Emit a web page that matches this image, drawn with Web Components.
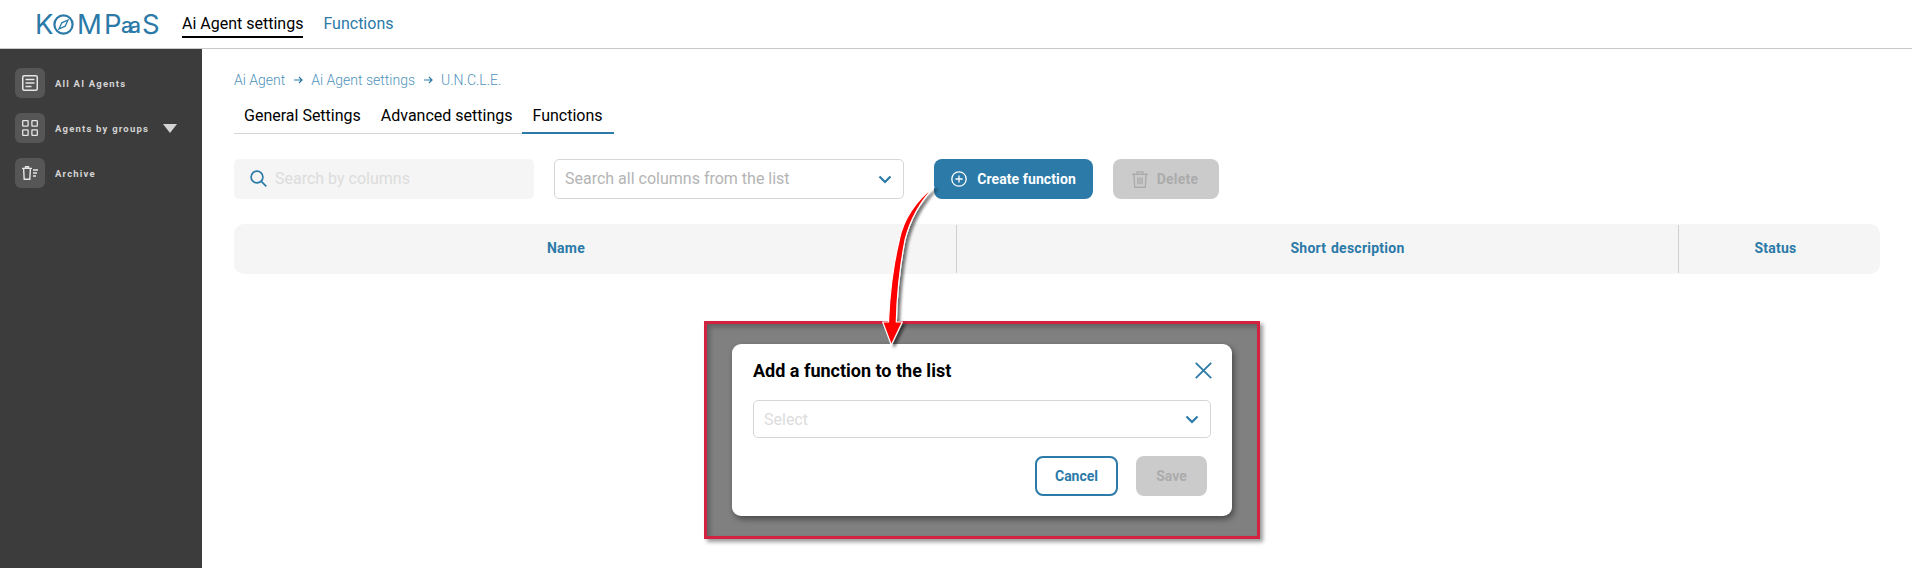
<!DOCTYPE html>
<html><head><meta charset="utf-8"><title>Kompas</title>
<style>
html,body{margin:0;padding:0;height:568px;overflow:hidden;background:#fff;font-family:Roboto,"Liberation Sans",sans-serif;}
</style></head><body>
<app-shell></app-shell>
<script>
const BLUE='#2b7aa8';
function def(name,html,setup){
  customElements.define(name,class extends HTMLElement{
    constructor(){super();const r=this.attachShadow({mode:'open'});r.innerHTML=html;}
    connectedCallback(){if(setup)setup(this);}
  });
}
const chevron=`<svg width="14" height="9" viewBox="0 0 14 9" fill="none" stroke="${BLUE}" stroke-width="2.2"><path d="M1.5 1.5 7 7l5.5-5.5"/></svg>`;

def('k-logo',`<style>
:host{display:flex;align-items:center;color:${BLUE};font:400 27.500px/28px Inter,sans-serif;height:28px}
span{display:block;text-align:center;flex:none}
svg{display:block;flex:none}
.aa{font:500 21px/28px Inter,sans-serif;letter-spacing:-4px;width:17px;margin:3px 4px 0 1px;text-align:left}
</style><span style="width:18px;text-align:left">K</span><svg width="21" height="21" viewBox="0 0 21 21" fill="none"><circle cx="10.500" cy="10.500" r="9.100" stroke="${BLUE}" stroke-width="2.200"/><path d="M15 6l-2.800 6.200L6 15l2.800-6.200z" stroke="${BLUE}" stroke-width="1.300"/></svg><span style="width:24px;margin-left:3px">M</span><span style="width:16px;margin-left:3px;">P</span><span class="aa">aa</span><span style="width:16px">S</span>`);

def('top-nav',`<style>
:host{display:flex;height:49px;box-sizing:border-box;align-items:flex-start;background:#fff;border-bottom:1px solid #c9c9c9;padding-left:35px;flex:none}
k-logo{margin-top:10px;width:147px;flex:none}
a{font-size:16px;line-height:19px;color:${BLUE};padding:14px 0 3px;display:block;height:20px;box-sizing:content-box}
a.on{color:#000;border-bottom:2px solid #000;margin-right:20px;height:19px}
</style><k-logo></k-logo><a class="on">Ai Agent settings</a><a>Functions</a>`);

def('side-item',`<style>
:host{display:flex;align-items:center;height:30px;color:#d4d4d4;font:700 9.500px/30px Roboto,sans-serif;letter-spacing:1.2px}
.ic{width:30px;height:30px;border-radius:6px;background:#565656;display:flex;align-items:center;justify-content:center;margin-right:10px;flex:none}
.tx{display:flex;align-items:center;padding-top:2px}
</style><div class="ic"><slot name="icon"></slot></div><div class="tx"><slot></slot></div>`);

def('side-bar',`<style>
:host{display:flex;flex-direction:column;gap:15px;width:202px;background:#3c3c3c;box-sizing:border-box;padding:19px 0 0 15px;flex:none}
.tri{width:0;height:0;border:7px solid transparent;border-top:9px solid #d4d4d4;border-bottom:0;margin-left:14px;margin-top:-2px}
svg{display:block}
</style>
<side-item><svg slot="icon" width="16" height="16" viewBox="0 0 16 16" fill="none" stroke="#e6e6e6"><rect x=".75" y=".75" width="14.500" height="14.500" rx="1.500" stroke-width="1.500"/><path d="M3.500 4.500h9M3.500 8h9M3.500 11.500h6" stroke-width="1.400"/></svg>All AI Agents</side-item>
<side-item><svg slot="icon" width="16" height="16" viewBox="0 0 16 16" fill="none" stroke="#e6e6e6" stroke-width="1.300"><rect x=".7" y=".7" width="5.400" height="5.400" rx=".6"/><rect x="9.900" y=".7" width="5.400" height="5.400" rx=".6"/><rect x=".7" y="9.900" width="5.400" height="5.400" rx=".6"/><rect x="9.900" y="9.900" width="5.400" height="5.400" rx=".6"/></svg>Agents by groups<span class="tri"></span></side-item>
<side-item><svg slot="icon" width="16" height="14" viewBox="0 0 16 14" fill="none" stroke="#e6e6e6" stroke-width="1.400"><path d="M0 2.400h10M3.500 2.200V.7h3v1.500M1.600 2.400l.6 10.900h5.600l.6-10.900M11 4h5M11 7h4M11 10h3"/></svg>Archive</side-item>`);

def('bread-crumbs',`<style>
:host{display:flex;align-items:center;color:#4f93bb;font-size:14px;font-weight:300;line-height:16px;height:16px}
svg{margin:0 8px 0 9px;display:block}
</style><span>Ai Agent</span><svg width="9" height="8" viewBox="0 0 9 8" fill="none" stroke="${BLUE}" stroke-width="1.200"><path d="M0 4h8M5 1l3 3-3 3"/></svg><span>Ai Agent settings</span><svg width="9" height="8" viewBox="0 0 9 8" fill="none" stroke="${BLUE}" stroke-width="1.200"><path d="M0 4h8M5 1l3 3-3 3"/></svg><span>U.N.C.L.E.</span>`);

def('tab-bar',`<style>
:host{display:flex;height:37px;box-sizing:border-box;border-bottom:1px solid #d6d6d6;width:380px;font-size:16px;line-height:19px;color:#000}
a{display:block;padding:9px 10px 0;height:37px;box-sizing:border-box;white-space:nowrap;flex:none}
a.on{border-bottom:2px solid ${BLUE};padding:9px 11px 0 10px}
</style><a>General Settings</a><a>Advanced settings</a><a class="on">Functions</a>`);

def('search-box',`<style>
:host{display:flex;align-items:center;width:300px;height:40px;background:#f5f5f5;border-radius:5px;box-sizing:border-box;padding-left:16px;padding-bottom:1px;font-size:16px;color:#dcdcdc;flex:none}
svg{margin-right:8px;display:block}
</style><svg width="17" height="17" viewBox="0 0 17 17" fill="none" stroke="${BLUE}" stroke-width="1.700"><circle cx="7" cy="7" r="5.900"/><path d="M11.300 11.300l5 5"/></svg>Search by columns`);

def('select-box',`<style>
:host{display:flex;align-items:center;justify-content:space-between;height:40px;box-sizing:border-box;border:1px solid #d6d6d6;border-radius:5px;padding:0 11px 0 10px;font-size:16px;color:var(--ph,#b4b4b4);background:#fff}
svg{display:block}
span{display:block;margin-bottom:var(--nudge,1px)}
</style><span><slot></slot></span>${chevron}`);

def('action-button',`<style>
:host{display:flex;align-items:center;justify-content:center;height:40px;border-radius:8px;box-sizing:border-box;font-size:14px;font-weight:700;flex:none}
:host([kind=primary]){background:${BLUE};color:#fff}
:host([kind=disabled]){background:#cbcbcb;color:#ababab}
:host([kind=outline]){background:#fff;color:${BLUE};border:2px solid ${BLUE}}
</style><slot></slot>`);

def('table-head',`<style>
:host{display:grid;grid-template-columns:722px 1px 721px 1px 1fr;align-items:center;height:50px;background:#f5f5f5;border-radius:10px;color:${BLUE};font-size:14px;font-weight:700;text-align:center;width:1646px;letter-spacing:.25px;word-spacing:1px}
i{display:block;height:48px;background:#d0d0d0}
div{padding-bottom:2px}
.n{padding-right:58px}.d{padding-left:60px}.st{padding-right:8px}
</style><div class="n">Name</div><i></i><div class="d">Short description</div><i></i><div class="st">Status</div>`);

def('main-view',`<style>
:host{display:flex;flex-direction:column;flex:1;box-sizing:border-box;padding:23px 0 0 32px;min-width:0}
tab-bar{margin-top:9px}
.tools{display:flex;margin-top:25px;gap:20px}
select-box{width:350px;flex:none}
.create{width:159px;margin-left:10px;letter-spacing:.1px}
.del{width:106px;letter-spacing:.2px}
svg{display:block;margin-right:9px}
table-head{margin-top:25px}
</style>
<bread-crumbs></bread-crumbs><tab-bar></tab-bar>
<div class="tools"><search-box></search-box><select-box>Search all columns from the list</select-box>
<action-button class="create" kind="primary"><svg width="16" height="16" viewBox="0 0 16 16" fill="none" stroke="#fff" stroke-width="1.300" style="margin-right:10px"><circle cx="8" cy="8" r="7.200"/><path d="M8 4.400v7.200M4.400 8h7.200"/></svg>Create function</action-button>
<action-button class="del" kind="disabled"><svg style="margin-left:-2px" width="16" height="17" viewBox="0 0 15 16" fill="none" stroke="#ababab" stroke-width="1.300"><path d="M0 3h15M4.800 3V.8h5.400V3M1.800 3l.7 12.300h10L13.200 3M5.500 6v6.500M7.500 6v6.500M9.500 6v6.500"/></svg>Delete</action-button></div>
<table-head></table-head>`);

def('dialog-card',`<style>
:host{display:block;width:500px;height:172px;background:#fff;border-radius:9px;box-sizing:border-box;padding:15px 21px;box-shadow:2px 3px 6px rgba(0,0,0,.45)}
.t{display:flex;justify-content:space-between;align-items:center;height:22px;font-size:18px;font-weight:700;color:#000}
select-box{margin-top:19px;height:38px;--ph:#dcdcdc;--nudge:0;width:458px}
.b{display:flex;justify-content:flex-end;gap:18px;margin:18px 4px 0 0}
.c{width:83px}.s{width:71px}
svg{display:block;}
</style>
<div class="t">Add a function to the list<svg style="margin-right:-1px" width="17" height="17" viewBox="0 0 17 17" fill="none" stroke="${BLUE}" stroke-width="1.800"><path d="M.8.800l15.400 15.400M16.200.800.8 16.200"/></svg></div>
<select-box>Select</select-box>
<div class="b"><action-button class="c" kind="outline">Cancel</action-button><action-button class="s" kind="disabled">Save</action-button></div>`);

def('highlight-frame',`<style>
:host{position:absolute;left:704px;top:321px;width:556px;height:218px;box-sizing:border-box;border:3px solid #d2223f;background:#808080;padding:20px 25px;box-shadow:3px 3px 4px rgba(0,0,0,.4), inset 3px 3px 5px rgba(0,0,0,.25)}
</style><dialog-card></dialog-card>`);

def('callout-arrow',`<style>
:host{position:absolute;left:860px;top:190px;width:100px;height:165px;pointer-events:none}
svg{display:block;overflow:visible}
</style><svg width="100" height="165" viewBox="0 0 100 165"><defs><filter id="s" x="-40%" y="-10%" width="180%" height="125%"><feDropShadow dx="3" dy="2" stdDeviation="1.800" flood-color="#000" flood-opacity=".55"/></filter></defs>
<path filter="url(#s)" d="M74-3C56 10 43 30 39.300 50C34 72 29.800 100 28.500 132L22.700 132 31.300 155 42.300 132 36.300 132C37 100 40 76 45 50C50 30 60 12 74-3Z" fill="#f00" stroke="#fff" stroke-width="1.200" stroke-linejoin="round"/></svg>`);

def('app-shell',`<style>
:host{display:flex;flex-direction:column;width:1912px;height:568px;position:relative;overflow:hidden}
.row{display:flex;flex:1;min-height:0}
</style><top-nav></top-nav><div class="row"><side-bar></side-bar><main-view></main-view></div><highlight-frame></highlight-frame><callout-arrow></callout-arrow>`);
</script></body></html>
